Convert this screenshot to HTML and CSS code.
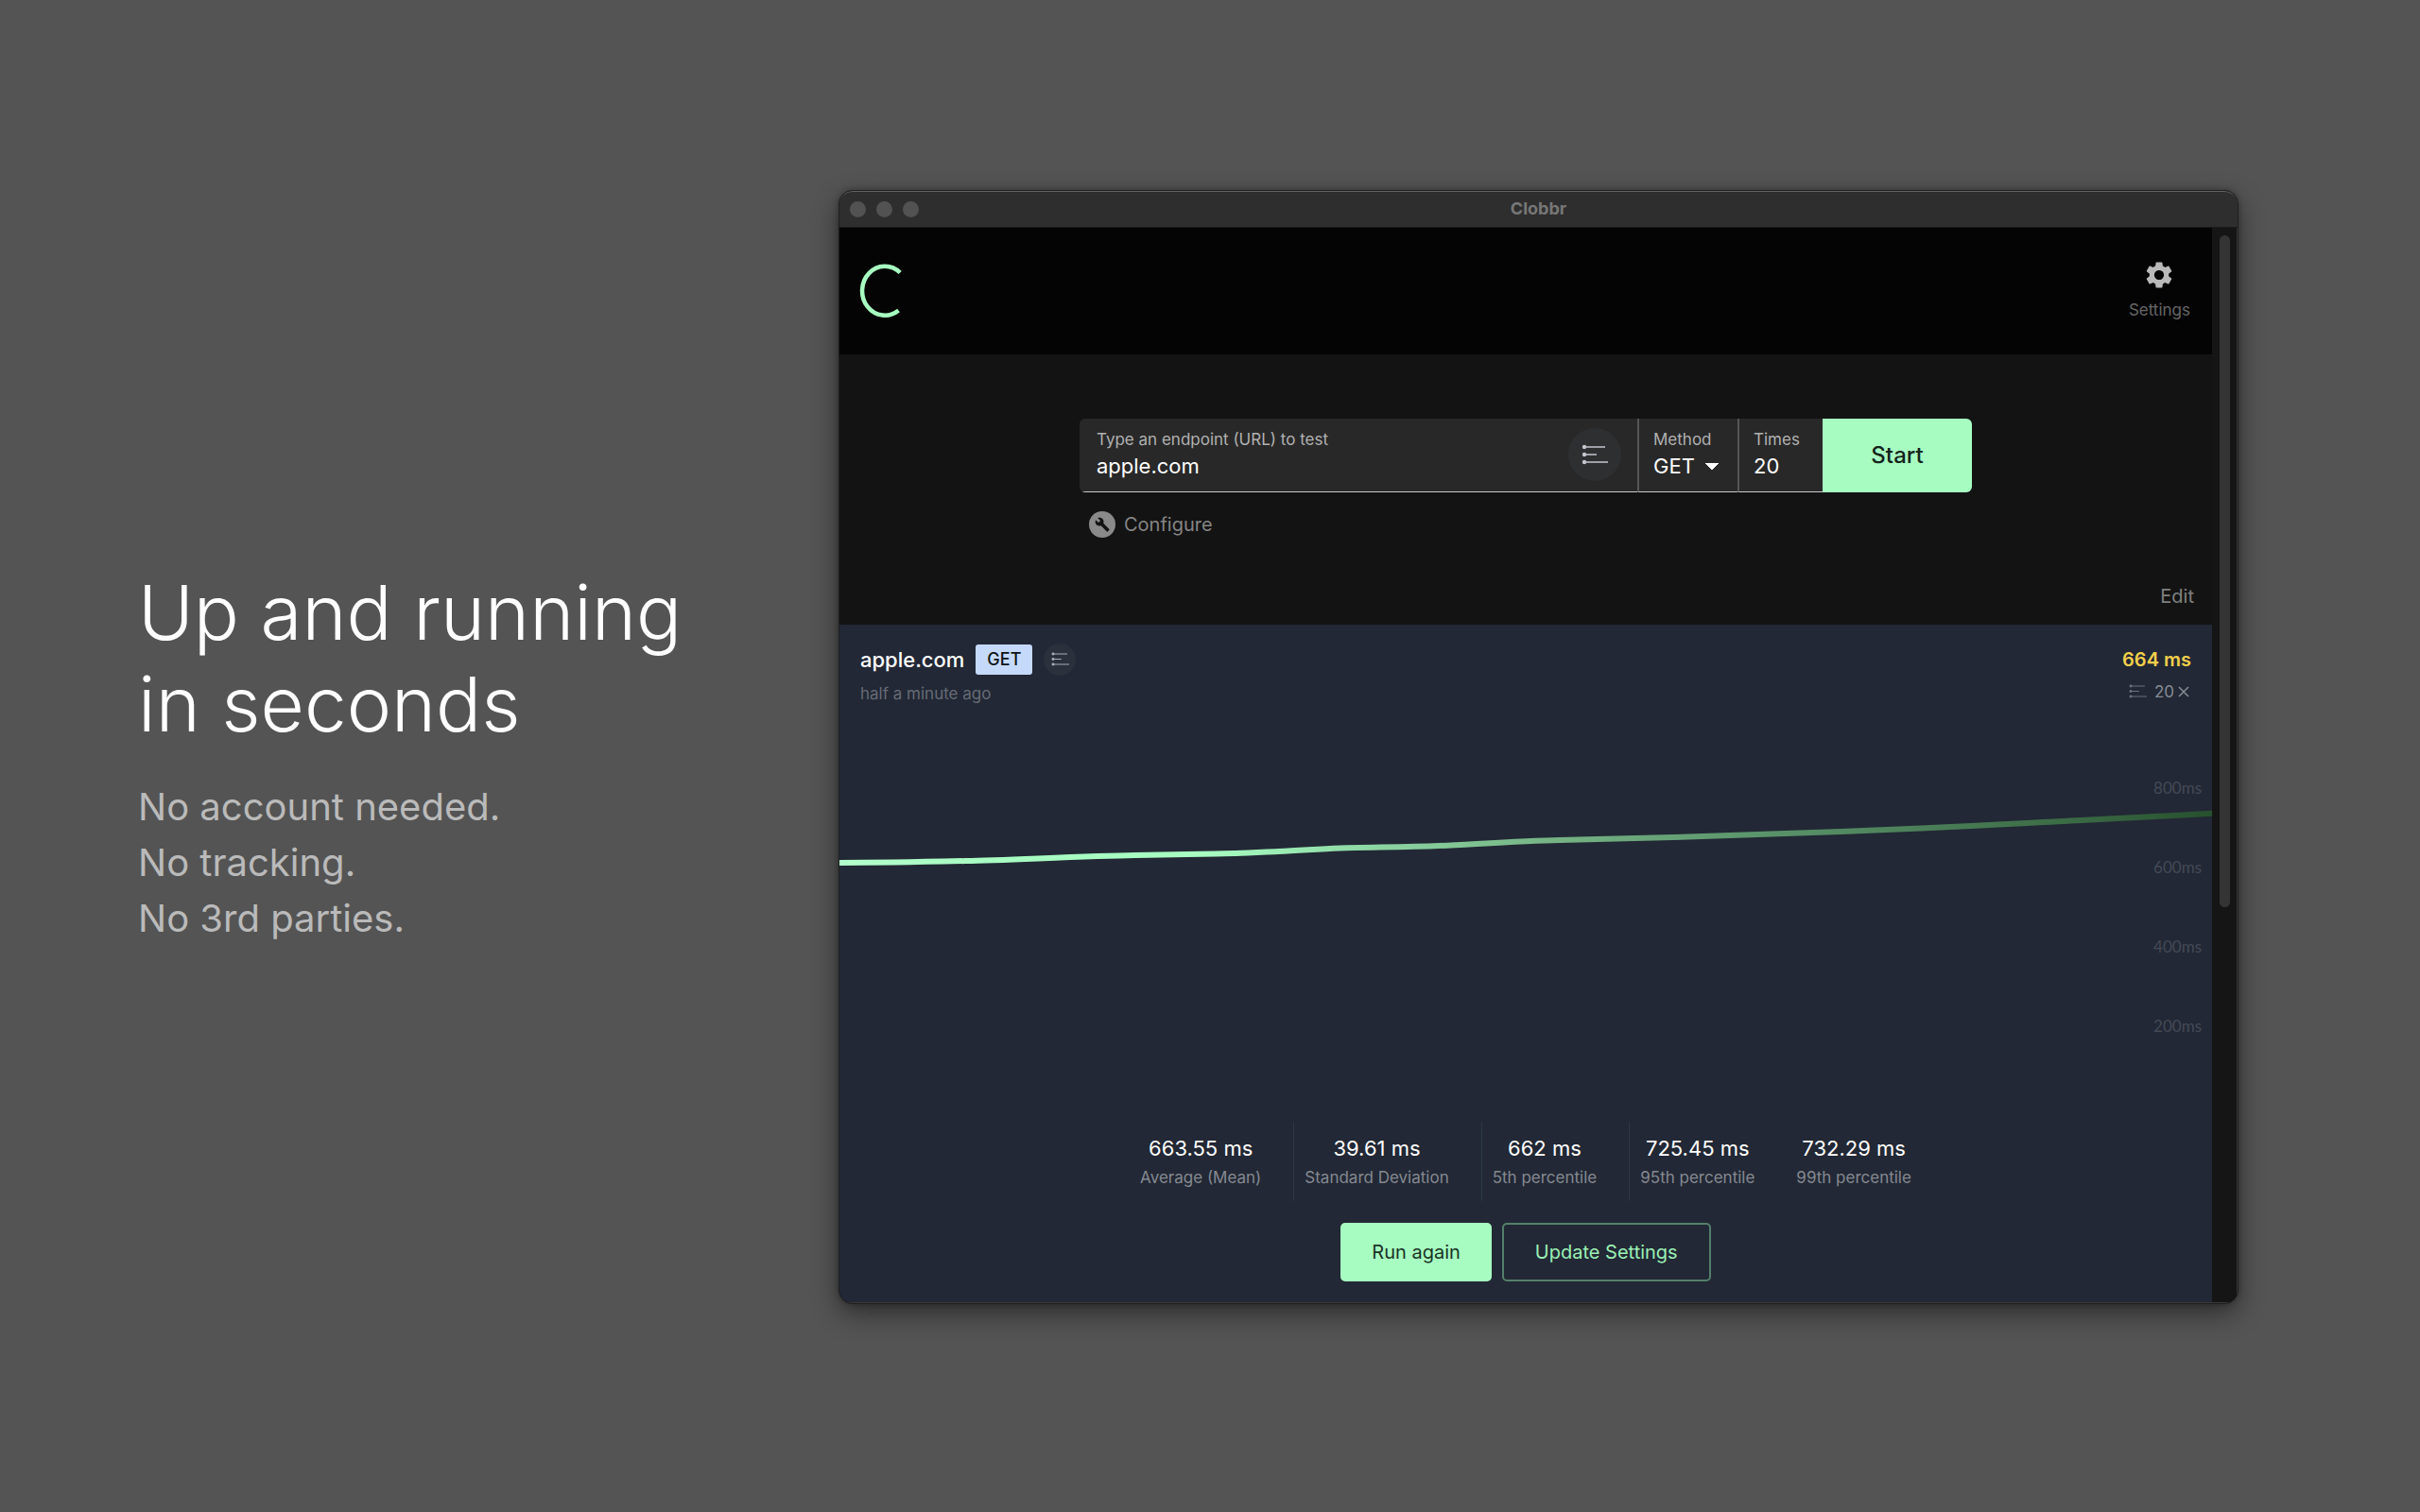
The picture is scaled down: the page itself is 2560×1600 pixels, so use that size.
FILE: index.html
```html
<!DOCTYPE html>
<html lang="en">
<head>
<meta charset="utf-8">
<title>Clobbr</title>
<link rel="stylesheet" href="styles.css">
</head>
<body>
<svg class="defs" aria-hidden="true">
  <symbol id="parallel" viewBox="0 0 28 22">
    <path d="M3 3H25M3 11H16M3 19H28" stroke="currentColor" stroke-width="1.6" fill="none"/>
    <circle cx="3" cy="3" r="2.2" fill="currentColor"/><circle cx="3" cy="11" r="2.2" fill="currentColor"/><circle cx="3" cy="19" r="2.2" fill="currentColor"/>
  </symbol>
</svg>
<div class="page">
  <section class="intro">
    <h1>Up and running<br>in seconds</h1>
    <p>No account needed.<br>No tracking.<br>No 3rd parties.</p>
  </section>

  <div class="window">
    <div class="titlebar">
      <div class="lights"><i></i><i></i><i></i></div>
      <span class="title">Clobbr</span>
    </div>
    <div class="body">
      <main class="content">
        <header class="header">
          <svg class="logo" viewBox="0 0 46 58" aria-label="Clobbr"><path d="M43.200 9.500A24 26 0 1 0 41.500 49.500" fill="none" stroke="#a7fcc1" stroke-width="4.500"/></svg>
          <button class="settings" type="button">
            <svg viewBox="0 0 24 24"><path fill="currentColor" d="M19.140 12.940c.040-.300.060-.610.060-.940 0-.320-.020-.640-.070-.940l2.030-1.580c.180-.140.230-.410.120-.610l-1.920-3.320c-.120-.220-.370-.290-.590-.220l-2.390.960c-.500-.380-1.030-.700-1.620-.940l-.360-2.540c-.040-.240-.240-.410-.480-.410h-3.840c-.240 0-.430.170-.470.410l-.360 2.540c-.590.240-1.130.570-1.620.940l-2.390-.960c-.220-.080-.470 0-.590.220L2.740 8.870c-.120.210-.080.470.120.610l2.030 1.580c-.050.300-.090.630-.090.940s.020.640.070.940l-2.030 1.580c-.180.140-.230.410-.120.610l1.920 3.320c.120.220.370.290.590.220l2.390-.960c.500.380 1.030.700 1.620.940l.360 2.540c.050.240.240.410.480.410h3.840c.240 0 .440-.170.470-.410l.360-2.540c.590-.240 1.130-.560 1.620-.940l2.390.960c.220.080.470 0 .590-.220l1.920-3.320c.120-.220.070-.470-.120-.610l-2.010-1.580zM12 15.600c-1.980 0-3.600-1.620-3.600-3.600s1.620-3.600 3.600-3.600 3.600 1.620 3.600 3.600-1.620 3.600-3.600 3.600z"/></svg>
            <span>Settings</span>
          </button>
        </header>

        <section class="setup">
          <form class="form">
            <div class="bar">
              <div class="field url">
                <div class="stack">
                  <label for="url">Type an endpoint (URL) to test</label>
                  <input id="url" type="text" value="apple.com">
                </div>
                <button class="round" type="button" aria-label="Run mode"><svg><use href="#parallel"/></svg></button>
              </div>
              <div class="field method">
                <div class="stack">
                  <label for="method">Method</label>
                  <select id="method"><option>GET</option></select>
                </div>
              </div>
              <div class="field times">
                <div class="stack">
                  <label for="times">Times</label>
                  <input id="times" type="text" value="20">
                </div>
              </div>
              <button class="start" type="button">Start</button>
            </div>
            <button class="configure" type="button">
              <svg viewBox="0 0 28 28"><circle cx="14" cy="14" r="14" fill="#8a8a8a"/><g transform="translate(6 6) scale(.68)"><path fill="#131313" d="M22.700 19l-9.100-9.100c.900-2.300.400-5-1.500-6.900-2-2-5-2.400-7.400-1.300L9 6 6 9 1.600 4.700C.400 7.100.900 10.100 2.900 12.100c1.900 1.900 4.600 2.400 6.900 1.500l9.100 9.100c.400.400 1 .400 1.400 0l2.300-2.300c.500-.400.500-1.100.100-1.400z"/></g></svg>
              <span>Configure</span>
            </button>
          </form>
          <button class="edit" type="button">Edit</button>
        </section>

        <section class="result">
          <div class="summary">
            <div>
              <div class="name">
                <h2>apple.com</h2><span class="verb">GET</span>
                <span class="round small"><svg><use href="#parallel"/></svg></span>
              </div>
              <p class="when">half a minute ago</p>
            </div>
            <div class="total">
              <strong>664 ms</strong>
              <span class="count"><svg><use href="#parallel"/></svg>20<svg class="cross" viewBox="0 0 12 12"><path d="M1 1L11 11M11 1L1 11" stroke="currentColor" stroke-width="1.500"/></svg></span>
            </div>
          </div>

          <div class="chart">
            <svg class="line" viewBox="0 0 1452 340" preserveAspectRatio="none">
              <defs><linearGradient id="fade" gradientUnits="userSpaceOnUse" x1="0" y1="0" x2="1452" y2="0">
                <stop offset="0" stop-color="#b2ffcb"/><stop offset=".12" stop-color="#a7fcc1"/><stop offset=".27" stop-color="#a7fcc1"/><stop offset=".4" stop-color="#8ad3a0"/><stop offset=".52" stop-color="#75b384"/><stop offset=".67" stop-color="#5a946b"/><stop offset=".8" stop-color="#4a7d57"/><stop offset=".9" stop-color="#3a6a44"/><stop offset="1" stop-color="#27502e"/>
              </linearGradient></defs>
              <path d="M-4 114C40 114 90 113 134 112S260 107 313 106S375 105 398 104.500S440 103 464 102S505 99.500 530 98.500S600 97.500 634 96S720 91 762 90S850 87.500 898 86.500S1060 81 1144 77.500S1260 71.500 1314 69S1400 64.500 1456 61.500" fill="none" stroke="url(#fade)" stroke-width="6"/>
            </svg>
            <ul class="ticks"><li>800ms</li><li>600ms</li><li>400ms</li><li>200ms</li></ul>
          </div>

          <dl class="stats">
            <div><dd>663.55 ms</dd><dt>Average (Mean)</dt></div>
            <div><dd>39.61 ms</dd><dt>Standard Deviation</dt></div>
            <div><dd>662 ms</dd><dt>5th percentile</dt></div>
            <div><dd>725.45 ms</dd><dt>95th percentile</dt></div>
            <div><dd>732.29 ms</dd><dt>99th percentile</dt></div>
          </dl>

          <div class="actions">
            <button class="solid" type="button">Run again</button>
            <button class="outline" type="button">Update Settings</button>
          </div>
        </section>
      </main>
      <div class="scroll"><div class="thumb"></div></div>
    </div>
  </div>
</div>
</body>
</html>
```
FILE: styles.css
```css
* { box-sizing: border-box; }
body, h1, h2, p, dl, dd, ul { margin: 0; padding: 0; }
body {
  background: #545454;
  color: #fff;
  font-family: Inter, "Liberation Sans", sans-serif;
}
button, input, select {
  margin: 0;
  padding: 0;
  border: 0;
  background: none;
  color: inherit;
  font: inherit;
}
svg { display: block; }
.defs { position: absolute; width: 0; height: 0; }

.page {
  display: grid;
  grid-template-columns: minmax(0, 741fr) minmax(0, 1481fr);
  align-items: center;
  min-height: 100vh;
  padding: 0 192px 0 146px;
}

.intro h1 { font-size: 80px; font-weight: 300; line-height: 97px; }
.intro p { margin-top: 31px; color: #bababa; font-size: 40px; line-height: 59px; }

.window {
  margin-bottom: 20px;
  border: 1px solid #1f1f1f;
  border-radius: 15px;
  overflow: hidden;
  background: #151515;
  box-shadow: 0 10px 28px rgba(0, 0, 0, .45), 0 0 6px rgba(0, 0, 0, .3);
}
.titlebar {
  display: grid;
  grid-template-columns: 1fr auto 1fr;
  align-items: center;
  height: 39px;
  padding: 0 11px;
  border-top: 1px solid #626262;
  border-bottom: 1px solid #1c1c1c;
  background: #2e2e2e;
  border-radius: 14px 14px 0 0;
}
.lights { display: flex; gap: 11px; }
.lights i { width: 17px; height: 17px; border-radius: 50%; background: #525252; }
.title { color: #777; font-size: 18px; font-weight: 700; line-height: 22px; }

.body { display: flex; border: solid #38383a; border-width: 0 1px 1px 0; }
.content { flex: 1; min-width: 0; }
.scroll { width: 26px; padding: 8px 7px 0 8px; background: #151515; }
.thumb { height: 711px; border-radius: 6px; background: #343434; }

.header {
  display: flex;
  justify-content: space-between;
  align-items: center;
  height: 134px;
  padding: 0 23px 0 21px;
  background: #040404;
}
.logo { width: 46px; height: 58px; }
.settings {
  display: flex;
  flex-direction: column;
  align-items: center;
  gap: 9px;
  padding-bottom: 2px;
  color: #b9b9b9;
}
.settings svg { width: 34px; height: 34px; }
.settings span { color: #666; font-size: 17px; line-height: 22px; }

.setup { display: flex; flex-direction: column; align-items: center; padding: 68px 19px 16px; background: #131313; }
.form { width: 944px; max-width: 100%; }
.bar { display: flex; height: 78px; border-radius: 6px; overflow: hidden; }
.field {
  display: flex;
  justify-content: space-between;
  align-items: center;
  border-bottom: 1px solid #ccc8d0;
  background: #282828;
}
.stack { display: flex; flex-direction: column; gap: 2px; min-width: 0; }
.stack label { color: #b1b1b1; font-size: 17px; line-height: 22px; }
.stack input, .stack select { width: 100%; height: 30px; font-size: 22px; line-height: 30px; }
.url { flex: 1; padding: 0 17px 0 18px; }
.method { width: 106px; padding: 0 14px 0 15px; border-left: 2px solid #555; }
.times { width: 90px; padding: 0 14px 0 15px; border-left: 2px solid #555; }
.method select {
  width: 74px;
  appearance: none;
  background: conic-gradient(from -45deg at 50% 100%, #fff 90deg, transparent 0) right 5px center / 14px 7px no-repeat;
}
.round {
  display: flex;
  flex: none;
  justify-content: center;
  align-items: center;
  width: 56px;
  height: 56px;
  border-radius: 50%;
  background: #2e2f31;
  color: #c4c6ce;
}
.round svg { width: 28px; height: 22px; }
.start { width: 158px; background: #a7fcc1; color: #12241a; font-size: 24px; font-weight: 500; }
.configure {
  display: flex;
  align-items: center;
  gap: 9px;
  margin: 20px 0 0 10px;
  color: #858585;
  font-size: 20px;
  line-height: 28px;
}
.configure svg { width: 28px; height: 28px; }
.edit { align-self: flex-end; margin-top: 48px; color: #808080; font-size: 20px; line-height: 28px; }

.result { padding-bottom: 22px; background: #222835; }
.summary { display: flex; justify-content: space-between; padding: 20px 22px 0 22px; }
.name { display: flex; align-items: center; gap: 12px; height: 34px; }
.name h2 { font-size: 22px; font-weight: 500; line-height: 30px; }
.verb { padding: 0 12px; border-radius: 3px; background: #c5dafb; color: #0d1117; font-size: 18px; font-weight: 500; line-height: 32px; }
.small { width: 34px; height: 34px; background: #2b303d; color: #a9acb5; }
.small svg { width: 19px; height: 15px; }
.when { margin-top: 8px; color: #666b75; font-size: 17px; line-height: 22px; }
.total { display: flex; flex-direction: column; align-items: flex-end; gap: 6px; }
.total strong { color: #f3cf4b; font-size: 20px; font-weight: 600; line-height: 34px; }
.count { display: flex; align-items: center; color: #868b94; font-size: 17px; line-height: 22px; }
.count svg { width: 19px; height: 15px; margin-right: 8px; color: #6c717c; }
.count svg.cross { width: 12px; height: 12px; margin: 0 2px 0 4px; color: #868b94; }

.chart { display: grid; height: 340px; margin-top: 54px; }
.line, .ticks { grid-area: 1 / 1; }
.line { width: 100%; height: 340px; }
.ticks {
  display: flex;
  flex-direction: column;
  gap: 60px;
  padding: 23px 11px 0;
  color: #444a56;
  font-family: Lato, "Liberation Sans", sans-serif;
  font-size: 17px;
  line-height: 24px;
  list-style: none;
  text-align: right;
}

.stats { display: flex; justify-content: center; margin-top: 48px; }
.stats div {
  display: flex;
  flex-direction: column;
  gap: 5px;
  height: 84px;
  padding: 13px 34px 0 11px;
  border-right: 1px solid #2d3744;
  text-align: center;
}
.stats div:first-child { padding-left: 0; }
.stats div:nth-child(4) { padding-right: 33px; border: 0; }
.stats div:last-child { padding-right: 0; border: 0; }
.stats dd { font-size: 22px; line-height: 30px; }
.stats dt { color: #858991; font-size: 17px; line-height: 22px; }

.actions { display: flex; justify-content: center; gap: 11px; margin-top: 23px; }
.actions button { height: 62px; border-radius: 5px; font-size: 20px; }
.solid { padding: 0 33px; background: #a7fcc1; color: #1a3325; }
.actions .outline { padding: 0 33px; border: 2px solid #547f6c; color: #9bf0b5; }
```
